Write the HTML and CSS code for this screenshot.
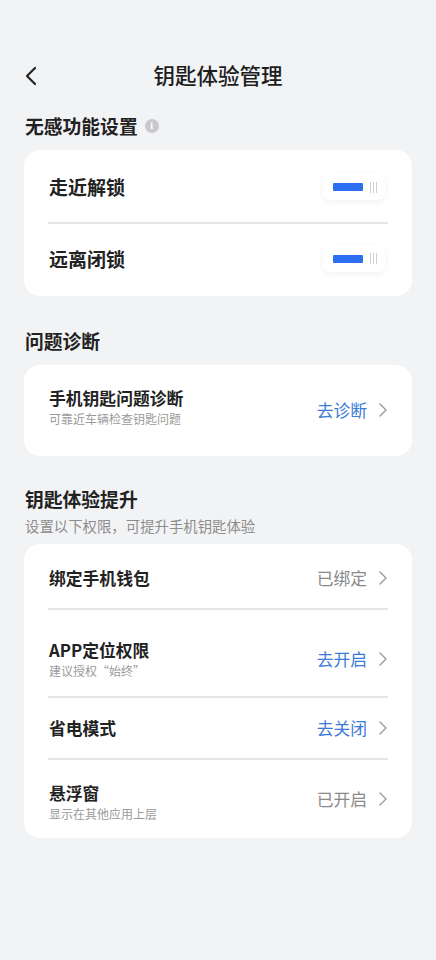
FILE: index.html
```html
<!DOCTYPE html>
<html lang="zh">
<head>
<meta charset="utf-8">
<link rel="stylesheet" href="styles.css">
</head>
<body>
<div class="page">
  <header class="nav">
    <svg class="back" width="14" height="20" viewBox="0 0 14 20"><path d="M11 2 L3 10 L11 18" fill="none" stroke="#222" stroke-width="2.2" stroke-linecap="round" stroke-linejoin="round"/></svg>
    <h1 class="nav-title">钥匙体验管理</h1>
  </header>

  <div class="sec-head sec1">
    <h2 class="sec-title">无感功能设置</h2>
    <span class="info">i</span>
  </div>
  <div class="card card1">
    <div class="row r-toggle">
      <span class="big-title">走近解锁</span>
      <span class="toggle"><span class="bar"></span><span class="grip"><i></i><i></i><i></i></span></span>
    </div>
    <div class="divider"></div>
    <div class="row r-toggle">
      <span class="big-title">远离闭锁</span>
      <span class="toggle"><span class="bar"></span><span class="grip"><i></i><i></i><i></i></span></span>
    </div>
  </div>

  <div class="sec-head sec2">
    <h2 class="sec-title">问题诊断</h2>
  </div>
  <div class="card card2">
    <div class="row r-diag">
      <div class="text">
        <div class="title">手机钥匙问题诊断</div>
        <div class="sub">可靠近车辆检查钥匙问题</div>
      </div>
      <div class="action blue">去诊断<svg class="chev" width="8" height="14" viewBox="0 0 8 14"><path d="M1 1 L7 7 L1 13" fill="none" stroke="#9a9a9a" stroke-width="1.4" stroke-linecap="round" stroke-linejoin="round"/></svg></div>
    </div>
  </div>

  <div class="sec-head sec3">
    <h2 class="sec-title">钥匙体验提升</h2>
  </div>
  <p class="sec-desc">设置以下权限，可提升手机钥匙体验</p>
  <div class="card card3">
    <div class="row r1">
      <div class="text"><div class="title">绑定手机钱包</div></div>
      <div class="action grey">已绑定<svg class="chev" width="8" height="14" viewBox="0 0 8 14"><path d="M1 1 L7 7 L1 13" fill="none" stroke="#9a9a9a" stroke-width="1.4" stroke-linecap="round" stroke-linejoin="round"/></svg></div>
    </div>
    <div class="divider"></div>
    <div class="row r2">
      <div class="text">
        <div class="title">APP定位权限</div>
        <div class="sub">建议授权“始终”</div>
      </div>
      <div class="action blue">去开启<svg class="chev" width="8" height="14" viewBox="0 0 8 14"><path d="M1 1 L7 7 L1 13" fill="none" stroke="#9a9a9a" stroke-width="1.4" stroke-linecap="round" stroke-linejoin="round"/></svg></div>
    </div>
    <div class="divider"></div>
    <div class="row r3">
      <div class="text"><div class="title">省电模式</div></div>
      <div class="action blue">去关闭<svg class="chev" width="8" height="14" viewBox="0 0 8 14"><path d="M1 1 L7 7 L1 13" fill="none" stroke="#9a9a9a" stroke-width="1.4" stroke-linecap="round" stroke-linejoin="round"/></svg></div>
    </div>
    <div class="divider"></div>
    <div class="row r4">
      <div class="text">
        <div class="title">悬浮窗</div>
        <div class="sub">显示在其他应用上层</div>
      </div>
      <div class="action grey">已开启<svg class="chev" width="8" height="14" viewBox="0 0 8 14"><path d="M1 1 L7 7 L1 13" fill="none" stroke="#9a9a9a" stroke-width="1.4" stroke-linecap="round" stroke-linejoin="round"/></svg></div>
    </div>
  </div>
</div>
</body>
</html>
```
FILE: styles.css
```css
* { box-sizing: border-box; }
html, body { margin: 0; padding: 0; }
body {
  background: #f2f3f5;
  font-family: "Noto Sans CJK SC", "Noto Sans", sans-serif;
  color: #1f1f1f;
  width: 436px;
  height: 960px;
  overflow: hidden;
}
.page { padding: 0 24px; }

.nav {
  height: 60px;
  margin-top: 45px;
  display: flex;
  align-items: center;
  justify-content: center;
  position: relative;
}
.back { position: absolute; left: 0; top: 21px; }
.nav-title {
  margin: 0;
  font-size: 21.5px;
  font-weight: 500;
  line-height: 30px;
  color: #1d1d1d;
}

.sec-head { display: flex; align-items: center; gap: 7px; padding-left: 1px; }
.sec-title { margin: 0; font-size: 18.8px; font-weight: 700; line-height: 26px; color: #222; }
.sec1 { margin-top: 8px; }
.info {
  width: 14px; height: 14px; border-radius: 50%;
  background: #c9c9cc; color: #fff;
  font-size: 10px; font-weight: 700; line-height: 14px; text-align: center;
  font-family: "Liberation Serif", serif;
}

.card {
  background: #fff;
  border-radius: 16px;
  padding: 0 24px;
  width: 388px;
}
.card1 { margin-top: 11px; padding-top: 2px; padding-bottom: 2px; }
.row { display: flex; align-items: center; justify-content: space-between; }
.r-toggle { height: 70px; }
.divider { height: 1.5px; background: #e5e5e7; }

.big-title { font-size: 19px; font-weight: 700; color: #222; line-height: 26px; padding-left: 1px; }
.toggle {
  width: 62px; height: 26px;
  border-radius: 6px;
  background: #fff;
  box-shadow: 0 2px 6px rgba(0,0,0,0.06);
  display: flex; align-items: center;
  padding-left: 10px;
  margin-right: 3px;
}
.bar { width: 30px; height: 8px; background: #2d6ef2; border-radius: 1px; }
.grip { display: flex; gap: 2px; margin-left: 7px; }
.grip i { display: block; width: 1px; height: 11px; background: #cfcfd2; }

.sec2 { margin-top: 32px; }
.card2 { margin-top: 11px; }
.r-diag { height: 91px; }
.text { display: flex; flex-direction: column; padding-left: 1px; }
.title { font-size: 16.8px; font-weight: 700; color: #222; line-height: 24px; }
.sub { font-size: 12px; color: #9a9a9a; line-height: 18px; }
.r-diag .text { margin-top: -6px; }

.action { display: flex; align-items: center; font-size: 16.8px; line-height: 24px; }
.action .chev { margin-left: 12px; margin-right: 1px; }
.blue { color: #3b7bd4; }
.grey { color: #8a8a8a; }

.sec3 { margin-top: 30px; }
.sec-desc { margin: 4px 0 0 1px; font-size: 14.4px; line-height: 20px; color: #8d8d8d; }
.card3 { margin-top: 8px; }
.r1 { height: 64.5px; padding-top: 5px; }
.r2 { height: 86.5px; padding-top: 12px; }
.r3 { height: 60.5px; }
.r4 { height: 78px; }
.r4 .text { margin-top: 6px; }
```
